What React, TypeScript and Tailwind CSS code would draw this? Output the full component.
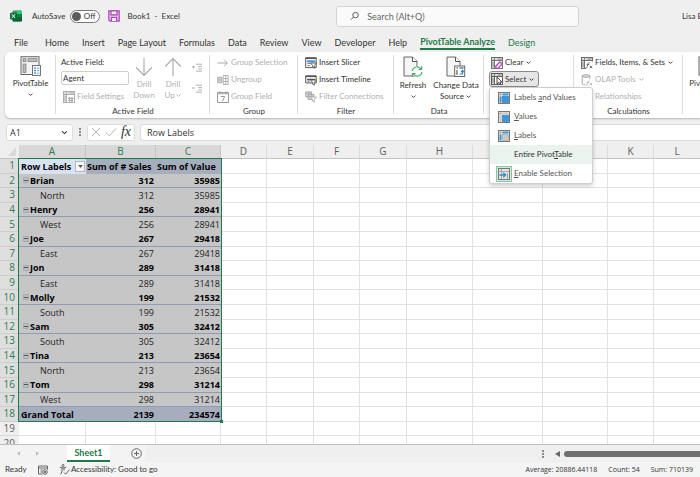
import React, { useState } from "react";

type P = { className?: string };

const ChevronDown = ({ className = "" }: P) => (
  <svg viewBox="0 0 8 8" className={`h-[7px] w-[7px] shrink-0 ${className}`} fill="none" stroke="currentColor" strokeWidth="1">
    <path d="M1.800 3 4 5 6.200 3" />
  </svg>
);

const ExcelLogo = () => (
  <svg viewBox="0 0 12 12" className="h-3 w-3 shrink-0">
    <rect x="2.5" y="0.5" width="9.3" height="11" rx="1" fill="#21a366" />
    <path d="M7 .5h3.8a1 1 0 0 1 1 1V4H7z" fill="#33c481" />
    <path d="M2.5 7H12v3.5a1 1 0 0 1-1 1H3.500a1 1 0 0 1-1-1z" fill="#185c37" />
    <path d="M7 4h5v3.500H7z" fill="#107c41" />
    <rect x="0" y="2.800" width="7" height="6.600" rx=".8" fill="#0f7038" />
    <path d="m2 4.300 3 3.600M5 4.300 2 7.900" stroke="#fff" strokeWidth="1" />
  </svg>
);

const SaveIcon = () => (
  <svg viewBox="0 0 12 12" className="h-3 w-3" fill="none" stroke="#a849b5" strokeWidth="1.200">
    <path d="M.8.8h10.400v10.400H2L.8 10z" fill="#e6b9ea" />
    <path d="M3 .8h6v4H3zM3.500 11V7.500h5V11" fill="#f8f0f9" />
  </svg>
);

const PivotBig = () => (
  <svg viewBox="0 0 22 20" className="h-5 w-[22px]" fill="none">
    <rect x="1" y=".7" width="18" height="17.800" fill="#f4f4f4" stroke="#666" />
    <rect x="3" y="2.700" width="3" height="3" fill="#bbb" stroke="#777" strokeWidth=".7" />
    <rect x="8" y="2.700" width="9" height="3" fill="#bbb" stroke="#777" strokeWidth=".7" />
    <rect x="3" y="8" width="3" height="8.500" fill="#bbb" stroke="#777" strokeWidth=".7" />
    <rect x="12.500" y="9.500" width="8" height="10" fill="#fff" stroke="#666" strokeWidth=".9" />
    <path d="M14 12.200h2M14 14.700h2M14 17.200h2" stroke="#2b88d8" strokeWidth="1.300" />
    <path d="M17 12.200h2.500M17 14.700h2.500M17 17.200h2.500" stroke="#4aa3e8" strokeWidth=".9" />
  </svg>
);

/* small pivot table frame that most command icons build on */
const PivotFrame = ({ children, className = "", fill = "#dcdcdc" }: P & { children?: React.ReactNode; fill?: string }) => (
  <svg viewBox="0 0 12 12" className={`h-3 w-3 shrink-0 ${className}`} fill="none" stroke="currentColor" strokeWidth=".9">
    <rect x=".5" y=".5" width="11" height="11" fill="#fff" />
    <path d="M.5.500h11v3H.5zM.5 3.500h3v8h-3z" fill={fill} />
    <path d="M3.500.500v3M6.500 2h4M2 5v5" strokeWidth=".7" />
    {children}
  </svg>
);

const GearMini = <path d="M5 7.500h5.500M5.500 9.500H10M6.500 6v5M9 6v5" strokeWidth="1.200" />;
const FxMini = (
  <>
    <path d="M5 4.500h7.500v8H5z" fill="#fff" stroke="none" />
    <path d="M4.500 11c1.500.4 1.700-1 2.100-3 .3-1.800.9-2.700 2.100-2.300M5.600 7.600h2.700M8.800 8.700l2.400 2.500M11.200 8.700l-2.400 2.500" strokeWidth=".9" />
  </>
);
const FunnelMini = (
  <path d="M5.500 6h6L9.300 8.500v2.700l-1.700-1V8.500z" fill="#fff" strokeWidth=".9" />
);

const SlicerIcon = () => (
  <svg viewBox="0 0 12 12" className="h-3 w-3 shrink-0" fill="none" stroke="#555">
    <path d="M.7.900h10.500v9.700H.7z" fill="#fff" />
    <path d="M.7 1.200h10.500" strokeWidth="1.600" />
    <path d="M2.300 3.600h7.400v1.500H2.300z" fill="#4aa3e8" stroke="#2b88d8" strokeWidth=".6" />
    <path d="M2.300 6.500h3M2.300 8.600h3" stroke="#888" />
    {FunnelMini}
  </svg>
);
const TimelineIcon = () => (
  <svg viewBox="0 0 12 12" className="h-3 w-3 shrink-0" fill="none" stroke="#555">
    <path d="M.7 1.900h10.500v7H.7z" fill="#fff" />
    <path d="M.7 2.400h10.500" strokeWidth="1.400" />
    <path d="M2 5.400h8M2.300 7h2.500" strokeWidth="1.200" />
    {FunnelMini}
  </svg>
);
const ConnectionsIcon = () => (
  <svg viewBox="0 0 12 12" className="h-3 w-3 shrink-0" fill="none" stroke="#aaa">
    <path d="M.7.900h6v5h-6zM3 3.500h6v5H3z" fill="#ddd" />
    <path d="M.7 2.600h6M3 5.300h6M3.700.900v5" strokeWidth=".7" />
    {FunnelMini}
  </svg>
);
const ArrowRight = () => (
  <svg viewBox="0 0 12 12" className="h-3 w-3 shrink-0" fill="none" stroke="#aaa">
    <path d="M.5 6h9.800M7 2.700 10.300 6 7 9.300" />
  </svg>
);
const UngroupIcon = () => (
  <svg viewBox="0 0 12 12" className="h-3 w-3 shrink-0" fill="none" stroke="#aaa" strokeWidth=".9">
    <path d="M6.200 1.500h5v9h-5zM6.200 4.500h5M6.200 7.500h5M8.700 1.500v9" />
    <path d="M.6 3.200h4.200v5.600H.6z" fill="#ddd" />
    <path d="m1.500 4.500 2.400 3M3.900 4.500l-2.400 3" />
  </svg>
);
const CalendarIcon = () => (
  <svg viewBox="0 0 12 12" className="h-3 w-3 shrink-0" fill="none" stroke="#999">
    <path d="M.5 1.500h11v10H.5z" />
    <path d="M.5 2.500h11" strokeWidth="1.600" stroke="#b5b5b5" />
    <path d="M3 .3v2M9 .3v2M3.700 5.500h4L5.500 10" />
  </svg>
);

const DrillArrow = ({ up = false }: { up?: boolean }) => (
  <svg viewBox="0 0 18 20" className={`h-5 w-[18px] ${up ? "rotate-180" : ""}`} fill="none" stroke="#aaa" strokeWidth="1.100">
    <path d="M9 1v17.500M1.200 10.500 9 18.500l7.800-8" />
  </svg>
);
const FieldStep = ({ plus = false }: { plus?: boolean }) => (
  <svg viewBox="0 0 10 9" className="h-[9px] w-[10px]" fill="none" stroke="#aaa" strokeWidth=".9">
    <path d="M4 1.200h6M6 3.600h4M6 6h4M4 8.200h6M0 4h3" />
    {plus && <path d="M1.500 2.500v3" />}
  </svg>
);

const RefreshIcon = () => (
  <svg viewBox="0 0 20 22" className="h-[22px] w-5" fill="none">
    <path d="M1 1h8.500l4.500 4.500V20H1z" fill="#f6f6f6" stroke="#666" />
    <path d="M9.500 1v4.500H14" fill="#fff" stroke="#555" />
    <circle cx="14" cy="15.500" r="5.500" fill="#fff" />
    <path d="M9.500 15c.4-4.500 6.500-5.500 8.600-1.800M18.800 16c-.4 4.500-6.500 5.500-8.700 1.800" stroke="#4aaf6e" strokeWidth="1.200" />
    <path d="M18.600 10.300v3h-3M9.500 20.700v-3h3" stroke="#4aaf6e" strokeWidth="1.200" />
  </svg>
);
const ChangeSourceIcon = () => (
  <svg viewBox="0 0 20 22" className="h-[22px] w-5" fill="none">
    <path d="M1 1h8.500l4.500 4.500V20H1z" fill="#f6f6f6" stroke="#666" />
    <path d="M9.500 1v4.500H14" fill="#fff" stroke="#555" />
    <rect x="8.700" y="10" width="10" height="10.500" fill="#fff" stroke="#666" />
    <path d="M10.500 12h1.500M13.500 12h4M10.900 14v5" stroke="#777" strokeWidth="1.400" />
    <path d="M13.500 18h3v-3.200M15 16l1.500-1.600L18 16" stroke="#2b88d8" strokeWidth="1.200" />
  </svg>
);
const ChartBig = () => (
  <svg viewBox="0 0 20 20" className="h-5 w-5" fill="none" stroke="#666">
    <rect x="1" y="1" width="18" height="18" fill="#f4f4f4" />
    <path d="M5 16V9M10 16V5M15 16v-5" strokeWidth="3" />
  </svg>
);

const ClearIcon = () => (
  <PivotFrame className="text-[#666]">
    <path d="m4.500 9.500 4.300-4.700 2.400 2-4 4.700H5.500z" fill="#f3d9f6" stroke="#a849b5" strokeWidth="1.200" />
  </PivotFrame>
);
const SelectIcon = () => (
  <PivotFrame className="text-[#555]">
    <path d="M6 4v7l1.600-1.500 1 2.200 1.200-.6-1-2.100h2.200z" fill="#fff" stroke="#333" />
  </PivotFrame>
);
const OlapIcon = () => (
  <svg viewBox="0 0 12 12" className="h-3 w-3 shrink-0" fill="none" stroke="#aaa">
    <ellipse cx="5" cy="2" rx="3.800" ry="1.300" fill="#ddd" />
    <path d="M1.200 2v7.500c0 .8 1.500 1.400 3 1.400M8.800 2v3" />
    <path d="M5 11.200c1.500.3 1.400-1 1.800-2.600.3-1.300.8-1.900 1.700-1.700M5.800 8.500H8M8.600 9l2.400 2.300M11 9l-2.400 2.300" strokeWidth=".8" />
  </svg>
);

const MenuIcon = ({ kind }: { kind: "both" | "values" | "labels" | "enable" }) => {
  const blue = "#3a96dd";
  const gray = "#c9c9c9";
  const lab = kind === "both" || kind === "labels" ? blue : gray;
  const val = kind === "both" || kind === "values" ? blue : gray;
  return (
    <svg viewBox="0 0 12 12" className="h-3 w-3" fill="none">
      <rect x=".5" y=".5" width="11" height="11" fill="#e4e4e4" stroke="#777" />
      {kind === "enable" ? (
        <>
          <path d="M3.500 1v10M1 3.500h10" stroke="#999" strokeWidth=".8" />
          <path d="M1.500 7h6M5.300 4.700 7.600 7 5.300 9.300" stroke="#2b88d8" strokeWidth="1.300" />
          <path d="M9.500 5v5.500" stroke="#999" />
        </>
      ) : (
        <>
          <rect x="1.500" y="1.500" width="2" height="2" fill="#aaa" />
          <rect x="4.500" y="1.500" width="6" height="2" fill={lab} />
          <rect x="1.500" y="4.500" width="2" height="6" fill={lab} />
          <rect x="4.500" y="4.500" width="6" height="6" fill={val} stroke={val === blue ? "#1f74bf" : "#aaa"} strokeWidth=".6" />
        </>
      )}
    </svg>
  );
};

const TABS = ["File", "Home", "Insert", "Page Layout", "Formulas", "Data", "Review", "View", "Developer", "Help", "PivotTable Analyze", "Design"];

const Group = ({ title, className, children }: { title?: string; className: string; children: React.ReactNode }) => (
  <section className={`relative flex shrink-0 flex-col pt-[2px] after:absolute after:top-[3px] after:right-0 after:h-[59px] after:w-px after:bg-[#dcdcdc] ${className}`}>
    <div className="flex h-[52px]">{children}</div>
    {title && <h2 className="text-center leading-[10px]">{title}</h2>}
  </section>
);

const Cmd = ({ icon, label, disabled = false, menu = false }: { icon: React.ReactNode; label: string; disabled?: boolean; menu?: boolean }) => (
  <button type="button" disabled={disabled} className="flex h-[17px] items-center gap-[2px] whitespace-nowrap disabled:text-[#b0b0b0]">
    {icon}
    <span>{label}</span>
    {menu && <ChevronDown />}
  </button>
);

const MENU: { kind?: "both" | "values" | "labels" | "enable"; pre: string; key: string; post: string }[] = [
  { kind: "both", pre: "Labels ", key: "a", post: "nd Values" },
  { kind: "values", pre: "", key: "V", post: "alues" },
  { kind: "labels", pre: "", key: "L", post: "abels" },
  { pre: "Entire Pivot", key: "T", post: "able" },
  { kind: "enable", pre: "", key: "E", post: "nable Selection" },
];

const GROUPS: [string, string, number, number][] = [
  ["Brian", "North", 312, 35985],
  ["Henry", "West", 256, 28941],
  ["Joe", "East", 267, 29418],
  ["Jon", "East", 289, 31418],
  ["Molly", "South", 199, 21532],
  ["Sam", "South", 305, 32412],
  ["Tina", "North", 213, 23654],
  ["Tom", "West", 298, 31214],
];

const COLS: [string, string][] = [
  ["A", "w-[67px]"], ["B", "w-[70px]"], ["C", "w-[65px]"], ["D", "w-[46px]"], ["E", "w-[47px]"], ["F", "w-[46px]"],
  ["G", "w-[47px]"], ["H", "w-[66px]"], ["I", "w-[70px]"], ["J", "w-[65px]"], ["K", "w-[46px]"], ["L", "w-[47px]"],
];
const REST = COLS.slice(3);

const Blank = () => (
  <>
    {REST.map(([c]) => (
      <td key={c} className="border-r border-b border-[#e2e2e2] bg-white" />
    ))}
  </>
);

const RowHead = ({ n, selected = true }: { n: number; selected?: boolean }) => (
  <th scope="row" className={`border-b p-0 pr-1 text-right text-[10px] font-normal ${selected ? "border-[#cdcdcd] bg-[#dedede] text-[#2b7d52]" : "border-[#dcdcdc] bg-[#efefef] text-[#606060]"}`}>
    {n}
  </th>
);

function Sheet() {
  return (
    <div className="relative h-[299px] overflow-hidden bg-white font-['Open_Sans','Noto_Sans',sans-serif] text-[9px] leading-[13px]">
      <table className="h-[306px] w-[701px] table-fixed border-separate border-spacing-0">
        <colgroup>
          <col className="w-[19px]" />
          {COLS.map(([c, w]) => (
            <col key={c} className={w} />
          ))}
        </colgroup>
        <thead>
          <tr className="h-[14px]">
            <td className="border-b border-[#c4c4c4] bg-[#efefef] p-0">
              <svg viewBox="0 0 19 13" className="h-[13px] w-[19px]"><path d="M16 2v9H8z" fill="#dadada" /></svg>
            </td>
            {COLS.map(([c], i) => (
              <th key={c} scope="col" className={`border-r border-b p-0 text-[10px] leading-[13px] font-normal ${i < 3 ? "border-[#c4c4c4] bg-[#d8d8d8] text-[#2b7d52]" : "border-r-[#dadada] border-b-[#c4c4c4] bg-[#efefef] text-[#606060]"}`}>
                {c}
              </th>
            ))}
          </tr>
        </thead>
        <tbody className="text-[#222]">
          <tr className="font-bold whitespace-nowrap text-black">
            <RowHead n={1} />
            <td className="bg-[#d9e1f2] p-0 pl-[2px]">
              <div className="flex items-center justify-between">
                Row Labels
                <button type="button" aria-label="Filter row labels" className="mr-px flex h-[11px] w-[10px] items-center justify-center border border-[#b5b5b5] bg-[#f6f6f6]">
                  <svg viewBox="0 0 6 4" className="h-[3px] w-[5px]"><path d="M0 0h6L3 4z" fill="#555" /></svg>
                </button>
              </div>
            </td>
            <td className="bg-[#a6aebd] p-0 pl-px">Sum of # Sales</td>
            <td className="bg-[#a6aebd] p-0 pl-px">Sum of Value</td>
            <Blank />
          </tr>
          {GROUPS.map(([name, region, sales, value], i) => (
            <React.Fragment key={name}>
              <tr className="bg-[#c6c6c6] font-bold text-black">
                <RowHead n={2 + i * 2} />
                <td className="border-b border-[#8e9bb8] p-0 pl-1">
                  <div className="flex items-center gap-px">
                    <button type="button" aria-label={`Collapse ${name}`} className="flex h-[6px] w-[6px] items-center justify-center rounded-[1px] border border-[#a3a8b2] bg-[#b9bfca]">
                      <span className="h-px w-1 bg-[#555]" />
                    </button>
                    {name}
                  </div>
                </td>
                <td className="border-b border-[#8e9bb8] p-0 pr-[2px] text-right">{sales}</td>
                <td className="border-b border-[#8e9bb8] p-0 pr-px text-right">{value}</td>
                <Blank />
              </tr>
              <tr className="bg-[#c6c6c6]">
                <RowHead n={3 + i * 2} />
                <td className={`p-0 pl-[21px] ${i === 7 ? "border-b border-[#8e9bb8]" : ""}`}>{region}</td>
                <td className={`p-0 pr-[2px] text-right ${i === 7 ? "border-b border-[#8e9bb8]" : ""}`}>{sales}</td>
                <td className={`p-0 pr-px text-right ${i === 7 ? "border-b border-[#8e9bb8]" : ""}`}>{value}</td>
                <Blank />
              </tr>
            </React.Fragment>
          ))}
          <tr className="font-bold text-black">
            <RowHead n={18} />
            <td className="bg-[#a6aebd] p-0 pl-[2px]">Grand Total</td>
            <td className="bg-[#a6aebd] p-0 pr-[2px] text-right">2139</td>
            <td className="bg-[#a6aebd] p-0 pr-px text-right">234574</td>
            <Blank />
          </tr>
          {[19, 20].map((n) => (
            <tr key={n}>
              <RowHead n={n} selected={false} />
              {COLS.map(([c]) => (
                <td key={c} className="border-r border-b border-[#e2e2e2]" />
              ))}
            </tr>
          ))}
        </tbody>
      </table>
      <div className="pointer-events-none absolute top-[13px] left-[18px] h-[264px] w-[204px] border border-[#1e7a48]">
        <span className="absolute -right-[2px] -bottom-[2px] h-[3px] w-[3px] bg-[#1e7a48]" />
      </div>
    </div>
  );
}

export default function App() {
  const [open, setOpen] = useState(true);
  const [field, setField] = useState("Agent");
  const [cell, setCell] = useState("A1");
  const [formula, setFormula] = useState("Row Labels");

  return (
    <div className="flex flex-col overflow-hidden bg-[#efefef] font-['Lato','Open_Sans',sans-serif] text-[8px] leading-[11px] text-[#333]">
      <header className="flex h-8 items-center">
        <div className="flex w-[336px] shrink-0 items-center pl-[10px]">
          <ExcelLogo />
          <label className="ml-[10px] flex items-center gap-[5px]">
            AutoSave
            <input type="checkbox" className="peer sr-only" />
            <span className="flex h-[13px] w-[30px] items-center justify-between rounded-full border border-[#777] bg-white pr-[4px] pl-px">
              <span className="h-[9px] w-[9px] rounded-full bg-[#5c5c5c]" />
              Off
            </span>
          </label>
          <button type="button" aria-label="Save" className="ml-[8px]"><SaveIcon /></button>
          <span className="ml-[7px] whitespace-pre">Book1  -  Excel</span>
        </div>
        <label className="flex h-[21px] flex-1 items-center gap-2 rounded-[3px] border border-[#d4d4d4] bg-[#fafafa] pl-[13px]">
          <svg viewBox="0 0 10 10" className="h-[10px] w-[10px]" fill="none" stroke="#555"><circle cx="6" cy="4" r="3" /><path d="M4 6 1 9" /></svg>
          <input type="search" aria-label="Search" placeholder="Search (Alt+Q)" className="w-full bg-transparent text-[9px] outline-none placeholder:text-[#666]" />
        </label>
        <div className="w-[121px] shrink-0 pl-[103px] whitespace-nowrap">Lisa B</div>
      </header>

      <nav className="flex h-5 items-start gap-[13px] pt-[3px] pl-[14px] text-[9px] leading-[13px]">
        {TABS.map((t) => (
          <button
            key={t}
            type="button"
            className={`h-[15px] whitespace-nowrap ${t === "File" ? "mr-1" : ""} ${t === "PivotTable Analyze" ? "border-b-2 border-[#1e7a48] font-bold text-[#1e7a48]" : t === "Design" ? "text-[#1e7a48]" : ""}`}
          >
            {t}
          </button>
        ))}
      </nav>

      <main className="relative z-10 ml-[5px] flex h-[66px] rounded-l-[5px] bg-white shadow-[0_1px_2px_rgba(0,0,0,0.25)]">
        <Group className="w-[51px]">
          <button type="button" className="flex w-full flex-col items-center pt-[2px]">
            <PivotBig />
            <span className="mt-[2px]">PivotTable</span>
            <ChevronDown className="mt-[2px]" />
          </button>
        </Group>

        <Group title="Active Field" className="w-[154px]">
          <div className="flex w-[74px] flex-col pl-[5px]">
            <label htmlFor="active-field" className="flex h-[17px] items-center">Active Field:</label>
            <input id="active-field" value={field} onChange={(e) => setField(e.target.value)} className="h-[14px] w-[68px] rounded-[2px] border border-[#cfcfcf] bg-white px-px outline-none" />
            <div className="mt-[3px] pl-[2px]">
              <Cmd disabled icon={<PivotFrame className="text-[#aaa]">{GearMini}</PivotFrame>} label="Field Settings" />
            </div>
          </div>
          <button type="button" disabled className="flex w-[28px] flex-col items-center pt-[3px] text-[#b0b0b0]">
            <DrillArrow />
            <span className="mt-[2px]">Drill</span>
            <span>Down</span>
          </button>
          <button type="button" disabled className="flex w-[30px] flex-col items-center pt-[3px] text-[#b0b0b0]">
            <DrillArrow up />
            <span className="mt-[2px]">Drill</span>
            <span className="flex items-center">Up<ChevronDown /></span>
          </button>
          <div className="flex flex-col items-center gap-3 pt-[9px] pl-1">
            <button type="button" disabled aria-label="Expand Field"><FieldStep plus /></button>
            <button type="button" disabled aria-label="Collapse Field"><FieldStep /></button>
          </div>
        </Group>

        <Group title="Group" className="w-[88px]">
          <div className="pl-[7px]">
            <Cmd disabled icon={<ArrowRight />} label="Group Selection" />
            <Cmd disabled icon={<UngroupIcon />} label="Ungroup" />
            <Cmd disabled icon={<CalendarIcon />} label="Group Field" />
          </div>
        </Group>

        <Group title="Filter" className="w-[96px]">
          <div className="pl-[7px]">
            <Cmd icon={<SlicerIcon />} label="Insert Slicer" />
            <Cmd icon={<TimelineIcon />} label="Insert Timeline" />
            <Cmd disabled icon={<ConnectionsIcon />} label="Filter Connections" />
          </div>
        </Group>

        <Group title="Data" className="w-[90px]">
          <button type="button" className="flex w-[38px] flex-col items-center pt-[2px]">
            <RefreshIcon />
            <span className="mt-[2px]">Refresh</span>
            <ChevronDown className="mt-[2px]" />
          </button>
          <button type="button" className="flex w-[48px] flex-col items-center pt-[2px] whitespace-nowrap">
            <ChangeSourceIcon />
            <span className="mt-[2px]">Change Data</span>
            <span className="flex items-center gap-px">Source<ChevronDown /></span>
          </button>
        </Group>

        <Group className="w-[90px]">
          <div className="relative pl-[5px]">
            <div className="pl-[2px]"><Cmd icon={<ClearIcon />} label="Clear" menu /></div>
            <button type="button" aria-expanded={open} onClick={() => setOpen(!open)} className="flex h-4 w-[50px] items-center gap-[2px] rounded-[3px] border border-[#8a8a8a] bg-[#e6e6e6] pl-px">
              <SelectIcon />
              Select
              <ChevronDown />
            </button>
            {open && (
              <div role="menu" className="absolute top-[33px] left-[5px] z-20 w-[104px] rounded-[3px] border border-[#cfcfcf] bg-white text-[#555] shadow-[0_2px_4px_rgba(0,0,0,0.2)]">
                {MENU.map((m) => (
                  <button key={m.key} type="button" role="menuitem" className={`flex h-[19px] w-full items-center pl-[6px] whitespace-nowrap ${m.kind ? "" : "bg-[#eaf3ee] text-[#333]"}`}>
                    <span className={`mr-[2px] flex h-4 w-4 items-center justify-center ${m.kind === "enable" ? "border border-[#8cc3a3] bg-[#d3ebdd]" : ""}`}>
                      {m.kind && <MenuIcon kind={m.kind} />}
                    </span>
                    <span>
                      {m.pre}<u>{m.key}</u>{m.post}
                    </span>
                  </button>
                ))}
              </div>
            )}
          </div>
        </Group>

        <Group title="Calculations" className="w-[109px]">
          <div className="pl-[7px]">
            <Cmd icon={<PivotFrame className="text-[#666]">{FxMini}</PivotFrame>} label="Fields, Items, & Sets" menu />
            <Cmd disabled icon={<OlapIcon />} label="OLAP Tools" menu />
            <Cmd disabled icon={<PivotFrame className="text-[#aaa]" />} label="Relationships" />
          </div>
        </Group>

        <div className="flex w-0 flex-1 overflow-hidden">
          <button type="button" className="flex w-[50px] shrink-0 flex-col items-center pt-[4px]">
            <ChartBig />
            <span className="mt-[2px]">PivotChart</span>
          </button>
        </div>
      </main>

      <section className="flex h-[27px] items-center pt-px pl-[6px] font-['Open_Sans',sans-serif] text-[9px]">
        <div className="flex h-[17px] w-[67px] items-center rounded-[3px] border border-[#dcdcdc] bg-white pr-1 pl-[3px]">
          <input aria-label="Name Box" value={cell} onChange={(e) => setCell(e.target.value)} className="w-0 flex-1 bg-transparent outline-none" />
          <button type="button" aria-label="Name list"><ChevronDown className="scale-125" /></button>
        </div>
        <svg viewBox="0 0 2 8" className="mx-[5px] h-2 w-[4px]"><path d="M1 0v2M1 3v2M1 6v2" stroke="#555" strokeWidth="1.300" /></svg>
        <div className="flex h-[17px] w-[48px] items-center justify-between rounded-[3px] border border-[#dcdcdc] bg-white px-[3px]">
          <button type="button" aria-label="Cancel"><svg viewBox="0 0 10 10" className="h-[10px] w-[10px]" fill="none" stroke="#b5b5b5"><path d="m1 1 8 8M9 1 1 9" /></svg></button>
          <button type="button" aria-label="Enter"><svg viewBox="0 0 12 10" className="h-[10px] w-3" fill="none" stroke="#b5b5b5"><path d="m1 5.500 3.300 3.300L11 1.500" /></svg></button>
          <button type="button" aria-label="Insert Function" className="font-['Liberation_Serif',serif] text-[14px] leading-[14px] italic">fx</button>
        </div>
        <input aria-label="Formula Bar" value={formula} onChange={(e) => setFormula(e.target.value)} className="ml-[5px] h-[17px] flex-1 rounded-l-[3px] border border-r-0 border-[#dcdcdc] bg-white pl-[6px] outline-none" />
      </section>

      <Sheet />

      <section className="flex h-[18px] items-center border-t border-[#c0c0c0] bg-[#efefef]">
        <div className="flex h-full w-[67px] items-center gap-4 bg-[#f3f3f3] pl-[17px]">
          <button type="button" aria-label="Previous sheet"><svg viewBox="0 0 4 6" className="h-[5px] w-[3px]"><path d="M4 0v6L0 3z" fill="#bbb" /></svg></button>
          <button type="button" aria-label="Next sheet"><svg viewBox="0 0 4 6" className="h-[5px] w-[3px]"><path d="M0 0v6l4-3z" fill="#bbb" /></svg></button>
        </div>
        <button type="button" className="-mt-px h-[17px] w-[43px] border-b-2 border-[#1e7a48] bg-white text-[9px] font-bold text-[#1e7a48]">Sheet1</button>
        <div className="flex h-full w-[36px] items-center justify-end bg-[#f3f3f3] pr-1">
          <button type="button" aria-label="New sheet"><svg viewBox="0 0 11 11" className="h-[11px] w-[11px]" fill="none" stroke="#666"><circle cx="5.500" cy="5.500" r="4.800" /><path d="M5.500 3v5M3 5.500h5" /></svg></button>
        </div>
        <span className="flex-1" />
        <svg viewBox="0 0 2 8" className="h-2 w-[4px]"><path d="M1 0v2M1 3v2M1 6v2" stroke="#555" strokeWidth="1.300" /></svg>
        <div className="ml-[10px] flex w-[145px] items-center gap-1">
          <svg viewBox="0 0 5 6" className="h-[6px] w-[5px]"><path d="M5 0v6L0 3z" fill="#666" /></svg>
          <span className="h-[6px] flex-1 rounded-l-full bg-[#707070]" />
        </div>
      </section>

      <footer className="flex h-[15px] items-center bg-[#f4f4f4] pr-[7px] pl-[5px] whitespace-nowrap">
        <span className="w-[33px]">Ready</span>
        <svg viewBox="0 0 10 10" className="h-[10px] w-[10px]" fill="none" stroke="#555" strokeWidth=".9"><path d="M9.500 4.500V1h-9v8h4M.5 3h9M2.500 5h2M2.500 7h1.500" /><circle cx="7" cy="7" r="2.300" /><circle cx="7" cy="7" r=".7" fill="#555" /></svg>
        <svg viewBox="0 0 11 11" className="mr-px ml-[11px] h-[11px] w-[11px]" fill="none" stroke="#555" strokeWidth=".9"><circle cx="4" cy="1.500" r="1" /><path d="M.8 3.300 4 4l3.200-.700M3 4v3l-1.200 3.300M5 4v2.500M5 8.500l1.700 1.700L10.500 5.500" /></svg>
        <span className="flex-1">Accessibility: Good to go</span>
        <div className="flex gap-[11px] font-['Open_Sans',sans-serif] text-[7px]">
          <span>Average: 20886.44118</span>
          <span>Count: 54</span>
          <span>Sum: 710139</span>
        </div>
      </footer>
    </div>
  );
}
